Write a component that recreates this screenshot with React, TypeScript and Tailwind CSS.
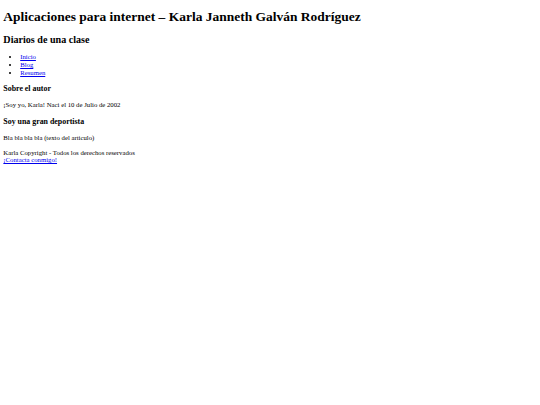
export default function App() {
  return (
    <div className="min-h-screen bg-white text-black font-['Liberation_Serif',serif] px-[3.37px] pt-px">
      <header>
        <h1 className="text-[13.47px] font-bold leading-[normal] mt-[8px] mb-[9.02px]">
          Aplicaciones para internet – Karla Janneth Galván Rodríguez
        </h1>
        <h2 className="text-[10.1px] font-bold leading-[normal] my-[8.38px]">Diarios de una clase</h2>
      </header>

      <nav>
        <ul className="list-disc pl-[16.84px] my-[6.74px] text-[6.74px] leading-[7.6px]">
          <li><a href="#" className="text-[#0000ee] underline">Inicio</a></li>
          <li><a href="#" className="text-[#0000ee] underline">Blog</a></li>
          <li><a href="#" className="text-[#0000ee] underline">Resumen</a></li>
        </ul>
      </nav>

      <section>
        <h3 className="text-[7.88px] font-bold leading-[9px] my-[8px]">Sobre el autor</h3>
        <p className="text-[6.74px] leading-[7.75px] my-[6.9px]">¡Soy yo, Karla! Naci el 10 de Julio de 2002</p>
      </section>

      <article>
        <h3 className="text-[7.88px] font-bold leading-[9px] my-[8px]">Soy una gran deportista</h3>
        <p className="text-[6.74px] leading-[7.75px] my-[6.9px]">Bla bla bla bla (texto del articulo)</p>
      </article>

      <footer className="text-[6.74px] leading-[7.75px]">
        Karla Copyright - Todos los derechos reservados
        <br />
        <a href="#" className="text-[#0000ee] underline">¡Contacta conmigo!</a>
      </footer>
    </div>
  );
}
